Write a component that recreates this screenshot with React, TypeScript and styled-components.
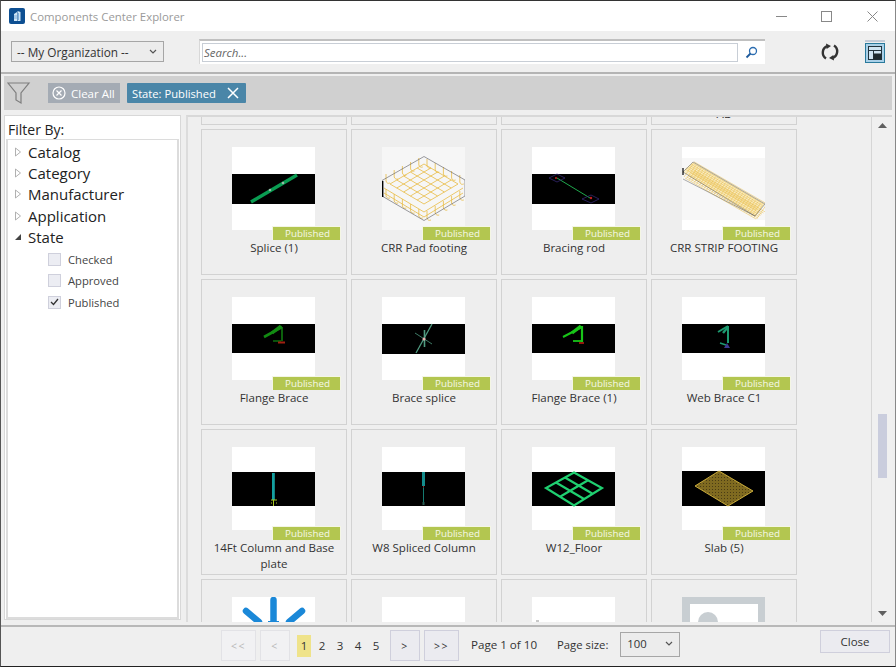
import React from "react";
import styled, { createGlobalStyle } from "styled-components";

const GlobalStyle = createGlobalStyle`
  html, body {
    margin: 0;
    padding: 0;
    background: #222;
  }
  * {
    box-sizing: border-box;
  }
`;

const FONT = `"Open Sans", "Noto Sans", "Liberation Sans", sans-serif`;

const Window = styled.div`
  width: 896px;
  height: 667px;
  display: flex;
  flex-direction: column;
  overflow: hidden;
  background: #efefef;
  border-top: 1px solid #333;
  border-left: 1px solid #555;
  border-right: 1px solid #888;
  border-bottom: 1px solid #222;
  font-family: ${FONT};
  color: #222;
`;

const TitleBar = styled.div`
  height: 30px;
  flex: none;
  display: flex;
  align-items: center;
  background: #fff;
  padding-left: 8px;
`;

const TitleText = styled.span`
  margin-left: 5px;
  font-size: 11.4px;
  color: #9a9a9a;
`;

const WindowControls = styled.div`
  margin-left: auto;
  display: flex;
`;

const WindowButton = styled.div`
  width: 45.5px;
  height: 28px;
  display: flex;
  align-items: center;
  justify-content: center;
`;

const Toolbar = styled.div`
  height: 43px;
  flex: none;
  display: flex;
  align-items: center;
  padding: 0 10px;
  border-bottom: 2px solid #b4b4b4;
`;

const OrgSelect = styled.div`
  width: 153px;
  height: 21px;
  display: flex;
  align-items: center;
  justify-content: space-between;
  padding: 0 6px 0 5px;
  background: #ececec;
  border: 1px solid #a6a6a6;
  font-size: 11.8px;
  color: #333;
`;

const SearchOuter = styled.div`
  width: 566px;
  height: 25px;
  margin-left: 35px;
  display: flex;
  align-items: center;
  padding-left: 2px;
  background: #fff;
  border-top: 2px solid #c0c0c0;
  border-left: 1px solid #d8d8d8;
`;

const SearchInput = styled.div`
  width: 536px;
  height: 19px;
  display: flex;
  align-items: center;
  padding-left: 1px;
  border: 1px solid #c8ced6;
  font-size: 11.5px;
  font-style: italic;
  color: #666;
`;

const SearchIcon = styled.div`
  flex: 1;
  display: flex;
  justify-content: center;
`;

const RefreshButton = styled.div`
  margin-left: 56px;
  display: flex;
`;

const LayoutButton = styled.div`
  margin-left: 26px;
  display: flex;
`;

const FilterBar = styled.div`
  height: 34px;
  flex: none;
  margin: 2px 3px 0;
  display: flex;
  align-items: center;
  padding-left: 3px;
  background: #d0d0d0;
`;

const ClearAll = styled.div`
  width: 72px;
  height: 20px;
  margin-left: 17px;
  display: flex;
  align-items: center;
  gap: 5px;
  padding-left: 4px;
  background: #a4abb4;
  color: #fff;
  font-size: 11.5px;
`;

const StateChip = styled.div`
  width: 119px;
  height: 20px;
  margin-left: 7px;
  display: flex;
  align-items: center;
  justify-content: space-between;
  padding: 0 7px 0 5px;
  background: #4a86a8;
  border-radius: 1px;
  color: #fff;
  font-size: 11.2px;
`;

const Main = styled.div`
  flex: 1;
  min-height: 0;
  display: flex;
  margin: 5px 3px 0;
`;

const FilterPanel = styled.div`
  width: 177px;
  height: 505px;
  flex: none;
  display: flex;
  flex-direction: column;
  background: #fff;
  border: 1px solid #d8d8d8;
`;

const FilterHeading = styled.div`
  height: 23px;
  flex: none;
  padding-left: 3px;
  font-size: 14px;
  line-height: 27px;
  color: #222;
`;

const Tree = styled.div`
  flex: 1;
  margin: 0 1px 0 1px;
  padding-top: 1px;
  border: 2px solid #dcdcdc;
  border-top-width: 1px;
`;

const TreeRow = styled.div`
  height: 21.3px;
  display: flex;
  align-items: center;
  font-size: 15px;
  color: #222;
`;

const TreeArrow = styled.div`
  width: 20px;
  flex: none;
  display: flex;
  justify-content: center;
`;

const CheckList = styled.div`
  padding-top: 1.5px;
`;

const CheckRow = styled.div`
  height: 21.3px;
  display: flex;
  align-items: center;
  padding-left: 40px;
  font-size: 11.2px;
  color: #444;
`;

const CheckBox = styled.div`
  width: 13px;
  height: 13px;
  margin-right: 7px;
  display: flex;
  align-items: center;
  justify-content: center;
  background: #ecedf3;
  border: 1px solid #cfd0dc;
`;

const GridPanel = styled.div`
  flex: 1;
  margin-left: 5px;
  height: 507px;
  display: flex;
  overflow: hidden;
  border-top: 2px solid #d8d8d8;
  border-left: 2px solid #dcdcdc;
`;

const GridViewport = styled.div`
  flex: 1;
  overflow: hidden;
  padding-left: 13px;
`;

const CardGrid = styled.div`
  margin-top: -138px;
  display: grid;
  grid-template-columns: repeat(4, 146px);
  grid-auto-rows: 146px;
  gap: 4px;
`;

const Card = styled.div`
  position: relative;
  display: flex;
  flex-direction: column;
  align-items: center;
  padding-top: 17px;
  background: #eeeeee;
  border: 1px solid #d2d2d2;
`;

const Thumb = styled.div`
  width: 83px;
  height: 83px;
  flex: none;
  display: flex;
  margin-right: 1px;
  background: #fff;
`;

const Badge = styled.div`
  position: absolute;
  left: 70px;
  top: 96px;
  width: 69px;
  height: 14px;
  background: #b3c650;
  border: 1px solid #f4f6e4;
  border-bottom: none;
  color: #f6f8e8;
  font-size: 9.8px;
  line-height: 14px;
  padding-left: 12px;
`;

const CardName = styled.div`
  margin-top: 10px;
  width: 130px;
  text-align: center;
  font-size: 11.55px;
  line-height: 16px;
  white-space: pre-line;
  color: #333;
`;

const ScrollBar = styled.div`
  width: 21px;
  flex: none;
  display: flex;
  flex-direction: column;
  align-items: center;
  background: #f0f0f0;
  border-left: 1px solid #d6d6d6;
`;

const ScrollArrow = styled.div`
  height: 17px;
  flex: none;
  display: flex;
  align-items: center;
  justify-content: center;
`;

const ScrollThumb = styled.div`
  width: 9px;
  height: 64px;
  margin-top: 280px;
  background: #cacddd;
`;

const ScrollTrack = styled.div`
  flex: 1;
  display: flex;
  flex-direction: column;
`;

const Footer = styled.div`
  height: 41px;
  flex: none;
  display: flex;
  align-items: center;
  padding: 0 0 2px 220px;
  border-top: 2px solid #b8b8b8;
`;

const PageButton = styled.div<{ $w: number; $off?: boolean }>`
  width: ${(p) => p.$w}px;
  height: 31px;
  margin-right: 4px;
  display: flex;
  align-items: center;
  justify-content: center;
  background: ${(p) => (p.$off ? "#f1f1f3" : "#ebebf0")};
  border: 1px solid ${(p) => (p.$off ? "#e2e2e6" : "#cfcfdc")};
  color: ${(p) => (p.$off ? "#b8b8b8" : "#333")};
  font-size: 10.5px;
  letter-spacing: 1.5px;
`;

const PageNumbers = styled.div`
  width: 93px;
  margin-left: 3px;
  display: flex;
  align-items: center;
`;

const PageNumber = styled.div<{ $active?: boolean }>`
  width: 14px;
  height: 22px;
  margin-right: 4px;
  display: flex;
  align-items: center;
  justify-content: center;
  background: ${(p) => (p.$active ? "#efe38a" : "transparent")};
  font-size: 11.5px;
  color: #333;
`;

const PageInfo = styled.div`
  margin-left: 8px;
  margin-bottom: 2px;
  font-size: 11.6px;
  color: #333;
`;

const PageSizeLabel = styled.div`
  margin-left: 20px;
  margin-bottom: 2px;
  font-size: 11.3px;
  color: #333;
`;

const PageSizeSelect = styled.div`
  width: 60px;
  height: 25px;
  margin-left: 12px;
  margin-bottom: 3px;
  display: flex;
  align-items: center;
  justify-content: space-between;
  padding: 0 6px 2px 6px;
  background: #ececec;
  border: 1px solid #a6a6a6;
  font-size: 11.3px;
  color: #333;
`;

const CloseButton = styled.div`
  width: 70px;
  height: 23px;
  margin-left: auto;
  margin-right: 5px;
  margin-bottom: 8px;
  display: flex;
  align-items: center;
  justify-content: center;
  background: #ebebf0;
  border: 1px solid #cfcfdc;
  font-size: 11.5px;
  color: #333;
`;

const Chevron = () => (
  <svg width="8" height="5" viewBox="0 0 8 5">
    <path d="M1 1l3 3 3-3" fill="none" stroke="#555" strokeWidth="1.2" />
  </svg>
);

type Pic = React.ReactNode;

const Band = ({ y, h }: { y: number; h: number }) => (
  <rect x="0" y={y} width="83" height={h} fill="#000" />
);

const Picture = ({ children }: { children?: Pic }) => (
  <svg width="83" height="83" viewBox="0 0 83 83">
    {children}
  </svg>
);

// rebar cage of the pad: floor grid plus hooks round the rim
const padLines = () => {
  const out: React.ReactNode[] = [];
  for (let i = 0; i <= 5; i++) {
    const t = i / 5;
    out.push(
      <line key={`a${i}`} x1={8 + 34 * t} y1={37 - 20 * t} x2={42 + 34 * t} y2={57 - 20 * t} />,
      <line key={`b${i}`} x1={8 + 34 * t} y1={37 + 20 * t} x2={42 + 34 * t} y2={17 + 20 * t} />
    );
  }
  for (let i = 0; i < 10; i++) {
    const x = 4 + i * 8.2;
    const low = i < 5 ? 42 + i * 5 : 64 - (i - 5) * 5;
    const high = i < 5 ? 27 - i * 4 : 12 + (i - 5) * 4;
    out.push(<path key={`c${i}`} d={`M${x} ${low}v7a3 3 0 0 0 4 2`} />);
    out.push(<path key={`d${i}`} d={`M${x} ${high}v7a3 3 0 0 0 4 2`} />);
  }
  out.push(<path key="rim" d="M2 41l40 24 39-24M2 46l40 24 39-24" />);
  return out;
};

const stripLines = () => {
  const out: React.ReactNode[] = [];
  for (let i = 0; i < 7; i++) {
    out.push(
      <line key={`s${i}`} x1={3 + i * 1.5} y1={22 - i * 1.2} x2={74 + i * 1.5} y2={63 - i * 1.2} />,
      <line key={`l${i}`} x1={3 + i * 1.5} y1={31 - i * 1.2} x2={74 + i * 1.5} y2={72 - i * 1.2} />
    );
  }
  for (let i = 0; i < 30; i++) {
    const x = 2 + i * 2.5;
    out.push(<line key={`v${i}`} x1={x} y1={30 + i * 1.45} x2={x + 9} y2={17 + i * 1.45} />);
  }
  return out;
};

const PICS: Record<string, Pic> = {
  splice: (
    <>
      <Band y={27} h={30} />
      <line x1="19" y1="55" x2="65" y2="28" stroke="#0a9c52" strokeWidth="3.4" />
      <circle cx="38" cy="43" r="1.3" fill="#9ab8a8" />
      <circle cx="51" cy="36" r="1.3" fill="#9ab8a8" />
    </>
  ),
  pad: (
    <>
      <rect width="83" height="83" fill="#f6f6f6" />
      <g fill="none" stroke="#e8bb44" strokeWidth="0.8">
        {padLines()}
      </g>
      <path d="M42 9.5L83 33v16L42 73.500 0 49V33.500z" fill="none" stroke="#59595f" strokeWidth="0.6" />
      <line x1="0.7" y1="34" x2="0.7" y2="50" stroke="#000" strokeWidth="1.4" />
    </>
  ),
  rod: (
    <>
      <Band y={27} h={30} />
      <line x1="25" y1="31" x2="58" y2="51" stroke="#1fa94d" strokeWidth="1" />
      <path d="M17 31l8-4 8 4-8 4zM50 52l9-4 8 4-8 4z" fill="none" stroke="#3a2c80" strokeWidth="0.7" />
      <circle cx="24" cy="31" r="1" fill="#c02020" />
      <circle cx="59" cy="51" r="1.2" fill="#c02020" />
    </>
  ),
  strip: (
    <>
      <rect y="11" width="83" height="62" fill="#f7f7f7" />
      <path d="M1 25L11 15l72 42-10 12z" fill="#f8ecc4" />
      <g fill="none" stroke="#e8bd48" strokeWidth="0.5">
        {stripLines()}
      </g>
      <path d="M1 25L11 15l72 42-10 12zM1 32l72 37" fill="none" stroke="#5a5a5a" strokeWidth="0.5" />
      <line x1="1" y1="21" x2="1" y2="28" stroke="#000" strokeWidth="1.2" />
    </>
  ),
  flange: (
    <>
      <Band y={27} h={29} />
      <g stroke="#128a12" fill="none">
        <path d="M32 40l18-10" strokeWidth="2.6" />
        <path d="M40 36l9-7" strokeWidth="3.4" />
        <path d="M50 30v14" strokeWidth="1.4" />
        <path d="M41 44h8" strokeWidth="1.2" />
      </g>
      <path d="M46 45.500h7" stroke="#a02010" strokeWidth="2" />
    </>
  ),
  brace: (
    <>
      <Band y={27} h={30} />
      <g stroke="#4f9a80" fill="none">
        <path d="M34 56l16-29" strokeWidth="1.3" />
        <path d="M33 36l17 11" strokeWidth="0.8" />
        <path d="M42.500 33v17" strokeWidth="1.6" />
      </g>
      <circle cx="42" cy="42" r="1.500" fill="#e8b0b0" />
    </>
  ),
  flangeBright: (
    <>
      <Band y={27} h={29} />
      <g stroke="#18c418" fill="none">
        <path d="M31 40l19-10" strokeWidth="2" />
        <path d="M40 36l9-7" strokeWidth="3.4" />
        <path d="M50 29v16" strokeWidth="2.2" />
        <path d="M41 44h8" strokeWidth="1.800" />
      </g>
      <path d="M47 46h5" stroke="#c02010" strokeWidth="1.500" />
    </>
  ),
  web: (
    <>
      <Band y={27} h={29} />
      <g stroke="#1d9a70" fill="none">
        <path d="M36 35l10-6" strokeWidth="2" />
        <path d="M41 36l5-6" strokeWidth="2.400" />
        <path d="M46 29v17" strokeWidth="2" />
        <path d="M38 46l6 2" strokeWidth="1.500" />
      </g>
      <path d="M42 51l3-5 3 5z" fill="#3c3c90" />
    </>
  ),
  column: (
    <>
      <Band y={25} h={34} />
      <rect x="40" y="26" width="2.800" height="27" fill="#14a0a0" />
      <path d="M39 53h6M41.500 53v6M39 56h1M44 56h1" stroke="#a8c820" strokeWidth="1" />
    </>
  ),
  spliced: (
    <>
      <Band y={25} h={34} />
      <rect x="40" y="25" width="3" height="14" fill="#148c8c" />
      <rect x="41" y="39" width="1" height="1.500" fill="#b02020" />
      <rect x="41" y="40.500" width="1" height="17" fill="#157a70" />
      <rect x="40.500" y="55" width="2" height="3" fill="#2a5a50" />
    </>
  ),
  floor: (
    <>
      <Band y={25} h={34} />
      <path
        d="M42 25.500L70 41 42 58.500 14 41zM33 30.500L61 47M24 35.500L52 52M56 33.250L28 49.750"
        fill="none"
        stroke="#1fcf70"
        strokeWidth="2.200"
      />
    </>
  ),
  slab: (
    <>
      <defs>
        <pattern id="slabDots" width="3" height="3" patternUnits="userSpaceOnUse">
          <rect width="3" height="3" fill="#7f6a20" />
          <rect width="1" height="1" fill="#4a3c14" />
        </pattern>
      </defs>
      <Band y={24} h={35} />
      <path d="M37 24l34 20-25 15-33-20z" fill="url(#slabDots)" stroke="#d8b840" strokeWidth="0.9" />
    </>
  ),
  spark: (
    <g fill="none" stroke="#1a88d8" strokeWidth="6.500" strokeLinecap="round">
      <path d="M41.500 3v24" />
      <path d="M14 14l13 11" />
      <path d="M70 14L57 25" />
      <path d="M36 26h11" strokeLinecap="butt" strokeWidth="4" />
    </g>
  ),
  blank: null,
  speck: <rect x="4" y="23" width="3" height="2" fill="#c8c8c8" />,
  placeholder: (
    <>
      <rect width="83" height="83" fill="#c8ced2" />
      <rect x="8" y="7" width="68" height="70" fill="#fff" />
      <circle cx="26" cy="25" r="10" fill="#c8ced2" />
    </>
  ),
};

const CARDS: { name: string; pic: string }[] = [
  { name: "", pic: "blank" },
  { name: "", pic: "blank" },
  { name: "", pic: "blank" },
  { name: "\nAB", pic: "blank" },
  { name: "Splice (1)", pic: "splice" },
  { name: "CRR Pad footing", pic: "pad" },
  { name: "Bracing rod", pic: "rod" },
  { name: "CRR STRIP FOOTING", pic: "strip" },
  { name: "Flange Brace", pic: "flange" },
  { name: "Brace splice", pic: "brace" },
  { name: "Flange Brace (1)", pic: "flangeBright" },
  { name: "Web Brace C1", pic: "web" },
  { name: "14Ft Column and Base plate", pic: "column" },
  { name: "W8 Spliced Column", pic: "spliced" },
  { name: "W12_Floor", pic: "floor" },
  { name: "Slab (5)", pic: "slab" },
  { name: "", pic: "spark" },
  { name: "", pic: "blank" },
  { name: "", pic: "speck" },
  { name: "", pic: "placeholder" },
];

const TREE = ["Catalog", "Category", "Manufacturer", "Application"];

const OpenArrow = () => (
  <svg width="8" height="10" viewBox="0 0 8 10">
    <path d="M1.500 1v8l5-4z" fill="#fff" stroke="#a8a8a8" strokeWidth="0.9" />
  </svg>
);

export default function App() {
  return (
    <>
      <GlobalStyle />
      <Window>
        <TitleBar>
          <svg width="16" height="16" viewBox="0 0 16 16">
            <rect width="16" height="16" rx="2" fill="#0d4f92" />
            <path d="M5 6l3-2v9H5zM8.500 3l3 1v9h-3z" fill="#cfe6f7" />
            <path d="M9.500 5v7M5 8h3M5 10h3" stroke="#4a8cc8" strokeWidth="0.6" />
          </svg>
          <TitleText>Components Center Explorer</TitleText>
          <WindowControls>
            <WindowButton>
              <svg width="11" height="11" viewBox="0 0 11 11">
                <line x1="0" y1="5.500" x2="11" y2="5.500" stroke="#888" />
              </svg>
            </WindowButton>
            <WindowButton>
              <svg width="11" height="11" viewBox="0 0 11 11">
                <rect x="0.500" y="0.500" width="10" height="10" fill="none" stroke="#888" />
              </svg>
            </WindowButton>
            <WindowButton>
              <svg width="11" height="11" viewBox="0 0 11 11">
                <path d="M.5.500l10 10M10.500.500l-10 10" stroke="#888" />
              </svg>
            </WindowButton>
          </WindowControls>
        </TitleBar>

        <Toolbar>
          <OrgSelect>
            -- My Organization --
            <Chevron />
          </OrgSelect>
          <SearchOuter>
            <SearchInput>Search...</SearchInput>
            <SearchIcon>
              <svg width="13" height="13" viewBox="0 0 13 13">
                <circle cx="8" cy="5" r="3.500" fill="none" stroke="#2a6cb0" strokeWidth="1.300" />
                <line x1="5.500" y1="7.500" x2="1.500" y2="11.500" stroke="#1d5a9c" strokeWidth="1.800" />
              </svg>
            </SearchIcon>
          </SearchOuter>
          <RefreshButton>
            <svg width="18" height="18" viewBox="0 0 18 18">
              <path d="M5 15.500A7 7 0 0 1 6 3.200" fill="none" stroke="#333" strokeWidth="2.400" />
              <path d="M5 .500l5 2.600-4.400 3z" fill="#333" />
              <path d="M13 2.500A7 7 0 0 1 12 14.800" fill="none" stroke="#333" strokeWidth="2.400" />
              <path d="M13 17.500l-5-2.600 4.400-3z" fill="#333" />
            </svg>
          </RefreshButton>
          <LayoutButton>
            <svg width="20" height="23" viewBox="0 0 20 23">
              <rect x="0" y="0" width="20" height="2" fill="#c4ccd8" />
              <rect x="0.500" y="3.500" width="19" height="19" fill="#a9d0e8" stroke="#2a7a9c" />
              <rect x="3.500" y="6.500" width="13" height="13" fill="#cfe4f2" stroke="#22333d" />
              <path d="M3.500 10.500h13M8.500 10.500v9" stroke="#22333d" fill="none" />
              <rect x="8.500" y="13.500" width="8" height="6" fill="#1e2a30" />
            </svg>
          </LayoutButton>
        </Toolbar>

        <FilterBar>
          <svg width="24" height="24" viewBox="0 0 24 24">
            <path d="M1 2h21l-8 10v10l-5-3v-7z" fill="none" stroke="#7e7e7e" strokeWidth="1.200" />
          </svg>
          <ClearAll>
            <svg width="14" height="14" viewBox="0 0 14 14">
              <circle cx="7" cy="7" r="6" fill="none" stroke="#fff" strokeWidth="1.200" />
              <path d="M4.500 4.500l5 5M9.500 4.500l-5 5" stroke="#fff" strokeWidth="1.200" />
            </svg>
            Clear All
          </ClearAll>
          <StateChip>
            State: Published
            <svg width="12" height="12" viewBox="0 0 12 12">
              <path d="M1 1l10 10M11 1L1 11" stroke="#fff" strokeWidth="1.500" />
            </svg>
          </StateChip>
        </FilterBar>

        <Main>
          <FilterPanel>
            <FilterHeading>Filter By:</FilterHeading>
            <Tree>
              {TREE.map((t) => (
                <TreeRow key={t}>
                  <TreeArrow>
                    <OpenArrow />
                  </TreeArrow>
                  {t}
                </TreeRow>
              ))}
              <TreeRow>
                <TreeArrow>
                  <svg width="8" height="8" viewBox="0 0 8 8">
                    <path d="M7 1v6H1z" fill="#444" />
                  </svg>
                </TreeArrow>
                State
              </TreeRow>
              <CheckList>
                <CheckRow>
                  <CheckBox />
                  Checked
                </CheckRow>
                <CheckRow>
                  <CheckBox />
                  Approved
                </CheckRow>
                <CheckRow>
                  <CheckBox>
                    <svg width="9" height="8" viewBox="0 0 9 8">
                      <path d="M1 4l2.500 2.500L8 1" fill="none" stroke="#333" strokeWidth="1.300" />
                    </svg>
                  </CheckBox>
                  Published
                </CheckRow>
              </CheckList>
            </Tree>
          </FilterPanel>

          <GridPanel>
            <GridViewport>
              <CardGrid>
                {CARDS.map((c, i) => (
                  <Card key={i}>
                    <Thumb>
                      <Picture>{PICS[c.pic]}</Picture>
                    </Thumb>
                    {c.pic !== "blank" && c.name && <Badge>Published</Badge>}
                    {c.name && <CardName>{c.name}</CardName>}
                  </Card>
                ))}
              </CardGrid>
            </GridViewport>
            <ScrollBar>
              <ScrollArrow>
                <svg width="9" height="5" viewBox="0 0 9 5">
                  <path d="M0 5l4.500-5L9 5z" fill="#606060" />
                </svg>
              </ScrollArrow>
              <ScrollTrack>
                <ScrollThumb />
              </ScrollTrack>
              <ScrollArrow>
                <svg width="9" height="5" viewBox="0 0 9 5">
                  <path d="M0 0l4.500 5L9 0z" fill="#606060" />
                </svg>
              </ScrollArrow>
            </ScrollBar>
          </GridPanel>
        </Main>

        <Footer>
          <PageButton $w={35} $off>
            {"<<"}
          </PageButton>
          <PageButton $w={30} $off>
            {"<"}
          </PageButton>
          <PageNumbers>
            <PageNumber $active>1</PageNumber>
            <PageNumber>2</PageNumber>
            <PageNumber>3</PageNumber>
            <PageNumber>4</PageNumber>
            <PageNumber>5</PageNumber>
          </PageNumbers>
          <PageButton $w={30}>{">"}</PageButton>
          <PageButton $w={35}>{">>"}</PageButton>
          <PageInfo>Page 1 of 10</PageInfo>
          <PageSizeLabel>Page size:</PageSizeLabel>
          <PageSizeSelect>
            100
            <Chevron />
          </PageSizeSelect>
          <CloseButton>Close</CloseButton>
        </Footer>
      </Window>
    </>
  );
}
